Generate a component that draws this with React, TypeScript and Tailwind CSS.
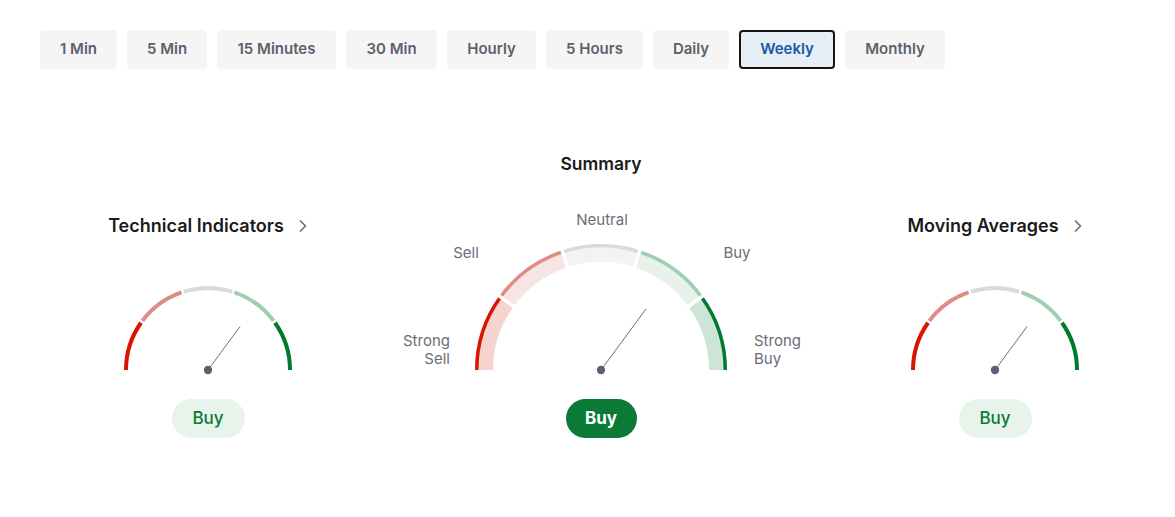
import React from "react";

const tabs = [
  { label: "1 Min", w: "w-[77px]" },
  { label: "5 Min", w: "w-[80px]" },
  { label: "15 Minutes", w: "w-[119px]" },
  { label: "30 Min", w: "w-[91px]" },
  { label: "Hourly", w: "w-[89px]" },
  { label: "5 Hours", w: "w-[97px]" },
  { label: "Daily", w: "w-[76px]" },
  { label: "Weekly", w: "w-[96px]", active: true },
  { label: "Monthly", w: "w-[100px]" },
];

const strokes = ["#d91400", "#dc8d86", "#dadada", "#9fcfb1", "#007a2e"];
const fills = ["#f7d3d0", "#f6e5e3", "#f3f3f3", "#e6f2eb", "#cde5d7"];

function pt(cx: number, cy: number, r: number, a: number) {
  const rad = (a * Math.PI) / 180;
  return [cx + r * Math.cos(rad), cy - r * Math.sin(rad)];
}

function sector(cx: number, cy: number, r1: number, r2: number, a1: number, a2: number) {
  const [ox1, oy1] = pt(cx, cy, r2, a1);
  const [ox2, oy2] = pt(cx, cy, r2, a2);
  const [ix2, iy2] = pt(cx, cy, r1, a2);
  const [ix1, iy1] = pt(cx, cy, r1, a1);
  return `M${ox1} ${oy1} A${r2} ${r2} 0 0 1 ${ox2} ${oy2} L${ix2} ${iy2} A${r1} ${r1} 0 0 0 ${ix1} ${iy1} Z`;
}

const NEEDLE = 53.6;

function BigGauge() {
  const cx = 128, cy = 126, R = 126;
  const [nx, ny] = pt(cx, cy, 76, NEEDLE);
  return (
    <svg width="256" height="131" viewBox="0 0 256 131">
      {[0, 1, 2, 3, 4].map((i) => (
        <g key={i}>
          <path d={sector(cx, cy, R - 18, R, 180 - 36 * i, 144 - 36 * i)} fill={fills[i]} />
          <path d={sector(cx, cy, R - 3.5, R, 180 - 36 * i, 144 - 36 * i)} fill={strokes[i]} />
        </g>
      ))}
      {[144, 108, 72, 36].map((a) => {
        const [x1, y1] = pt(cx, cy, 100, a);
        const [x2, y2] = pt(cx, cy, 132, a);
        return <line key={a} x1={x1} y1={y1} x2={x2} y2={y2} stroke="#ffffff" strokeWidth="3.5" />;
      })}
      <line x1={cx} y1={cy} x2={nx} y2={ny} stroke="#6b7080" strokeWidth="1" />
      <circle cx={cx} cy={cy} r="4.2" fill="#5b6172" />
    </svg>
  );
}

function SmallGauge() {
  const cx = 86, cy = 86, R = 84;
  const [nx, ny] = pt(cx, cy, 54, NEEDLE);
  return (
    <svg width="172" height="91" viewBox="0 0 172 91">
      {[0, 1, 2, 3, 4].map((i) => (
        <path key={i} d={sector(cx, cy, R - 4, R, 180 - 36 * i - (i ? 0.8 : 0), 144 - 36 * i + (i < 4 ? 0.8 : 0))} fill={strokes[i]} />
      ))}
      <line x1={cx} y1={cy} x2={nx} y2={ny} stroke="#6b7080" strokeWidth="1" />
      <circle cx={cx} cy={cy} r="4.2" fill="#5b6172" />
    </svg>
  );
}

function Chevron() {
  return (
    <svg width="10" height="14" viewBox="0 0 10 14" className="ml-[14px]">
      <path d="M2.5 2 L7.5 7 L2.5 12" fill="none" stroke="#6b7080" strokeWidth="1.7" strokeLinecap="round" strokeLinejoin="round" />
    </svg>
  );
}

function SidePanel({ title }: { title: string }) {
  return (
    <div className="flex flex-col items-center">
      <div className="flex h-[20px] items-center">
        <span className="text-[18px] font-semibold leading-[20px] text-[#1a1a1a]">{title}</span>
        <Chevron />
      </div>
      <div className="mt-[48px]">
        <SmallGauge />
      </div>
      <div className="mt-[24px] flex h-[39px] w-[73px] items-center justify-center rounded-full bg-[#e8f3ec] text-[17px] font-medium text-[#0a7a35]">
        Buy
      </div>
    </div>
  );
}

export default function App() {
  return (
    <div className="min-h-[517px] w-[1175px] bg-white pt-[30px] text-[#1a1a1a]" style={{ fontFamily: "Inter, 'Noto Sans', sans-serif" }}>
      <div className="flex gap-[10px] pl-[40px]">
        {tabs.map((t) => (
          <div
            key={t.label}
            className={
              t.active
                ? `${t.w} flex h-[39px] items-center justify-center rounded-[4px] border-2 border-[#141414] bg-[#e6eef6] text-[15px] font-semibold text-[#1c5aa6]`
                : `${t.w} flex h-[39px] items-center justify-center rounded-[4px] bg-[#f5f5f5] text-[15px] font-semibold text-[#5b616e]`
            }
          >
            {t.label}
          </div>
        ))}
      </div>

      <div className="grid grid-cols-[336px_450px_338px] items-end pl-[40px]">
        <SidePanel title="Technical Indicators" />

        <div className="flex flex-col items-center">
          <div className="mt-[85px] text-[17.5px] font-semibold leading-[20px] text-[#1a1a1a]">Summary</div>
          <div className="relative mt-[29px] flex h-[172px] w-full items-end justify-center text-[15px] text-[#6a6d78]">
            <span className="absolute left-[226px] top-[7px] -translate-x-1/2 leading-[20px]">Neutral</span>
            <span className="absolute left-[90px] top-[40px] -translate-x-1/2 leading-[20px]">Sell</span>
            <span className="absolute left-[361px] top-[40px] -translate-x-1/2 leading-[20px]">Buy</span>
            <span className="absolute right-[376px] top-[129px] text-right leading-[18px]">
              Strong
              <br />
              Sell
            </span>
            <span className="absolute left-[378px] top-[129px] leading-[18px]">
              Strong
              <br />
              Buy
            </span>
            <BigGauge />
          </div>
          <div className="mt-[24px] flex h-[39px] w-[71px] items-center justify-center rounded-full bg-[#0b7a36] text-[17px] font-bold text-white">
            Buy
          </div>
        </div>

        <SidePanel title="Moving Averages" />
      </div>
    </div>
  );
}
